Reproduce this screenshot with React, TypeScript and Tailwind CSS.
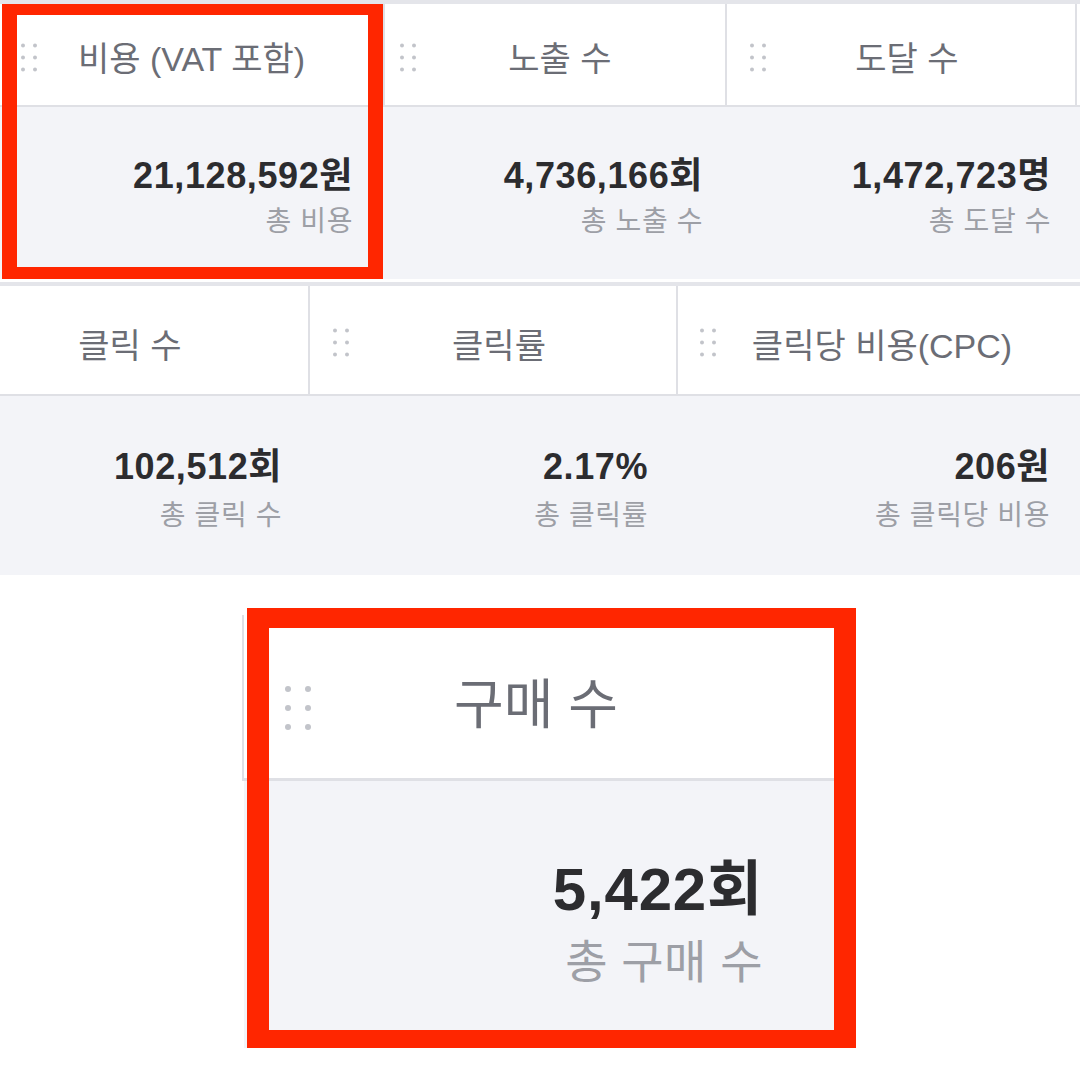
import React from "react";

const FONT = {
  fontFamily: '"Liberation Sans", "Noto Sans CJK KR", sans-serif',
};

function Handle({ big = false }: { big?: boolean }) {
  if (big) {
    return (
      <svg width="28" height="46" viewBox="0 0 28 46" className="block">
        {[3, 23].map((x) =>
          [4, 23, 42].map((y) => (
            <circle key={`${x}-${y}`} cx={x} cy={y} r="3" fill="#c2c4ca" />
          ))
        )}
      </svg>
    );
  }
  return (
    <svg width="17" height="29" viewBox="0 0 17 29" className="block">
      {[2, 14].map((x) =>
        [2.5, 14.5, 26.5].map((y) => (
          <circle key={`${x}-${y}`} cx={x} cy={y} r="2" fill="#c2c4ca" />
        ))
      )}
    </svg>
  );
}

type Col = {
  title: string;
  value: string;
  sub: string;
  width: string;
  handle: boolean;
  handleLeft: string;
  headPad: string;
  bodyPad: string;
};

function HeaderCell({
  c,
  headerH,
  headTop,
  subGap,
}: {
  c: Col;
  headerH: string;
  headTop: string;
  subGap: string;
}) {
  return (
    <div className={`${c.width} shrink-0 flex flex-col`}>
      <div
        className={`${headerH} relative bg-white border-r-2 border-b-2 border-[#dfe0e5] flex items-center justify-center ${headTop} ${c.headPad}`}
      >
        {c.handle && (
          <div className={`absolute ${c.handleLeft} top-1/2 -translate-y-[12px]`}>
            <Handle />
          </div>
        )}
        <span className="text-[34px] leading-[42px] text-[#6b6d75] whitespace-nowrap">
          {c.title}
        </span>
      </div>
      <div className={`flex-1 bg-[#f3f4f8] flex flex-col items-end ${c.bodyPad}`}>
        <span className="text-[36px] leading-[42px] font-bold text-[#2c2c2f] whitespace-nowrap tracking-[0.6px]">
          {c.value}
        </span>
        <span className={`${subGap} text-[28px] leading-[34px] text-[#9d9fa6] whitespace-nowrap tracking-[0.6px]`}>
          {c.sub}
        </span>
      </div>
    </div>
  );
}

const row1: Col[] = [
  {
    title: "비용 (VAT 포함)",
    value: "21,128,592원",
    sub: "총 비용",
    width: "w-[385px]",
    handle: true,
    handleLeft: "left-[21px]",
    headPad: "",
    bodyPad: "pr-[32px] pt-[48px]",
  },
  {
    title: "노출 수",
    value: "4,736,166회",
    sub: "총 노출 수",
    width: "w-[342px]",
    handle: true,
    handleLeft: "left-[15px]",
    headPad: "pl-[10px]",
    bodyPad: "pr-[24px] pt-[48px]",
  },
  {
    title: "도달 수",
    value: "1,472,723명",
    sub: "총 도달 수",
    width: "w-[350px]",
    handle: true,
    handleLeft: "left-[23px]",
    headPad: "pl-[12px]",
    bodyPad: "pr-[26px] pt-[48px]",
  },
  {
    title: "",
    value: "",
    sub: "",
    width: "w-[60px]",
    handle: false,
    handleLeft: "",
    headPad: "",
    bodyPad: "",
  },
];

const row2: Col[] = [
  {
    title: "클릭 수",
    value: "102,512회",
    sub: "총 클릭 수",
    width: "w-[310px]",
    handle: false,
    handleLeft: "",
    headPad: "pr-[48px]",
    bodyPad: "pr-[28px] pt-[50px]",
  },
  {
    title: "클릭률",
    value: "2.17%",
    sub: "총 클릭률",
    width: "w-[368px]",
    handle: true,
    handleLeft: "left-[23px]",
    headPad: "pl-[12px]",
    bodyPad: "pr-[30px] pt-[50px]",
  },
  {
    title: "클릭당 비용(CPC)",
    value: "206원",
    sub: "총 클릭당 비용",
    width: "w-[410px]",
    handle: true,
    handleLeft: "left-[22px]",
    headPad: "pl-[20px] pr-[20px]",
    bodyPad: "pr-[38px] pt-[50px]",
  },
];

export default function App() {
  return (
    <div
      className="w-[1080px] h-[1080px] bg-white overflow-hidden flex flex-col"
      style={FONT}
    >
      {/* Block 1 */}
      <div className="relative h-[279px] shrink-0 border-t-4 border-[#e4e5ea] flex overflow-hidden">
        {row1.map((c, i) => (
          <HeaderCell key={i} c={c} headerH="h-[103px]" headTop="pt-[8px]" subGap="mt-[8px]" />
        ))}
        <div className="absolute left-[2px] top-[-4px] w-[381px] h-[279px] border-t-[15px] border-x-[15px] border-b-[12px] border-[#ff2600]" />
      </div>

      {/* Block 2 */}
      <div className="mt-[3px] h-[293px] shrink-0 border-t-4 border-[#e4e5ea] flex overflow-hidden">
        {row2.map((c, i) => (
          <HeaderCell key={i} c={c} headerH="h-[110px]" headTop="pt-[12px]" subGap="mt-[11px]" />
        ))}
      </div>

      {/* Block 3 */}
      <div className="mt-[33px] ml-[242px] w-[614px] h-[440px] relative shrink-0">
        <div className="pt-[7px] h-full flex flex-col">
          <div className="h-[166px] relative bg-white border-l-2 border-b-[3px] border-[#dfe0e5] flex items-center justify-center pt-[16px] pr-[28px]">
            <div className="absolute left-[41px] top-[70px]">
              <Handle big />
            </div>
            <span className="text-[54px] leading-[64px] text-[#6b6d75] whitespace-nowrap">
              구매 수
            </span>
          </div>
          <div className="flex-1 ml-[2px] bg-[#f3f4f8] flex flex-col items-end pr-[93px] pt-[74px]">
            <span className="text-[60px] leading-[70px] font-bold text-[#2c2c2f] whitespace-nowrap tracking-[0.8px]">
              5,422회
            </span>
            <span className="mt-[10px] text-[46px] leading-[54px] text-[#9d9fa6] whitespace-nowrap tracking-[0.5px]">
              총 구매 수
            </span>
          </div>
        </div>
        <div className="absolute left-[5px] top-0 right-0 bottom-0 border-t-[20px] border-x-[22px] border-b-[18px] border-[#ff2600]" />
      </div>
    </div>
  );
}
